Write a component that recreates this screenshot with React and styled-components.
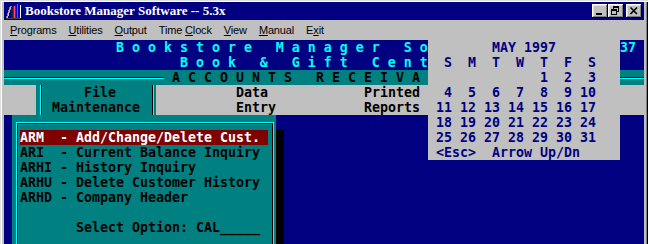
import React from "react";
import styled, { createGlobalStyle, css } from "styled-components";

const NAVY = "#000080";
const TEAL = "#008080";
const GRAY = "#c0c0c0";
const CYAN = "#00ffff";
const MAROON = "#800000";
const COL = 8;
const ROW = 15;

const Global = createGlobalStyle`
  html, body { margin: 0; padding: 0; background: ${GRAY}; }
  body { width: 648px; height: 244px; overflow: hidden; }
`;

const Window = styled.div`
  width: 648px;
  height: 244px;
  box-sizing: border-box;
  padding: 2px 4px 0 4px;
  background: ${GRAY};
  box-shadow: inset 1px 1px 0 #dfdfdf, inset 2px 2px 0 #fff, inset -1px 0 0 #000,
    inset -2px 0 0 #808080;
  display: flex;
  flex-direction: column;
  overflow: hidden;
`;

const TitleBar = styled.div`
  height: 18px;
  flex: none;
  background: ${NAVY};
  display: flex;
  align-items: center;
  padding: 0 2px;
`;

const TitleIcon = styled.svg`
  width: 16px;
  height: 16px;
  flex: none;
`;

const TitleText = styled.span`
  margin-left: 3px;
  flex: 1;
  color: #fff;
  font: bold 13px/18px "Liberation Serif", "Times New Roman", serif;
  white-space: nowrap;
`;

const Controls = styled.div`
  display: flex;
  align-items: center;
`;

const CtlBtn = styled.div`
  width: 16px;
  height: 14px;
  margin-left: ${(p) => p.$gap || 0}px;
  background: ${GRAY};
  box-shadow: inset -1px -1px 0 #000, inset 1px 1px 0 #fff, inset -2px -2px 0 #808080,
    inset 2px 2px 0 #dfdfdf;
  display: flex;
`;

const Glyph = styled.svg`
  width: 16px;
  height: 14px;
`;

const MenuBar = styled.div`
  height: 20px;
  flex: none;
  display: flex;
  font: 11px/20px "Liberation Sans", Arial, sans-serif;
  letter-spacing: -0.15px;
  color: #000;
`;

const MenuItem = styled.span`
  padding: 0 6px;
  white-space: nowrap;
`;

const Acc = styled.span`
  text-decoration: underline;
  text-underline-offset: 1px;
`;

const Console = styled.div`
  position: relative;
  width: 640px;
  flex: 1;
  background: ${NAVY};
  overflow: hidden;
  font: bold 13.29px/15px "DejaVu Sans Mono", monospace;
  white-space: pre;
`;

const Row = styled.div`
  display: flex;
  height: ${ROW}px;
  background: ${(p) => p.$bg || "transparent"};
  color: ${(p) => p.$fg || "inherit"};
`;

const Seg = styled.div`
  width: ${(p) => p.$cols * COL}px;
  flex: none;
  overflow: hidden;
`;

const Rule = styled.div`
  width: ${(p) => p.$cols * COL}px;
  flex: none;
  height: ${ROW}px;
  background: linear-gradient(#000, #000) 0 7px / 100% 1px no-repeat,
    linear-gradient(${CYAN}, ${CYAN}) 0 8px / 100% 1px no-repeat;
`;

const TabBand = styled.div`
  display: flex;
  height: ${ROW * 2}px;
  background: ${GRAY};
  color: #000;
`;

const Tab = styled.div`
  width: ${(p) => (p.$cols ? `${p.$cols * COL}px` : "auto")};
  flex: ${(p) => (p.$cols ? "none" : "1")};
  line-height: ${ROW}px;
  ${(p) =>
    p.$active &&
    css`
      background: linear-gradient(${CYAN}, ${CYAN}) 4px 0 / 1px 100% no-repeat,
        linear-gradient(#000, #000) 5px 0 / 1px 100% no-repeat,
        linear-gradient(#000, #000) ${p.$cols * COL - 4}px 0 / 1px 100% no-repeat,
        linear-gradient(${CYAN}, ${CYAN}) ${p.$cols * COL - 3}px 0 / 1px 100% no-repeat,
        ${TEAL};
    `}
`;

const TabLine = styled.div`
  height: ${ROW}px;
`;

const Body = styled.div`
  padding-left: ${COL}px;
`;

const MenuBox = styled.div`
  position: relative;
  width: ${33 * COL}px;
  height: ${11 * ROW}px;
  box-sizing: border-box;
  padding: ${ROW}px 0 0 ${COL}px;
  background: ${TEAL};
  color: #000;
  box-shadow: ${COL}px ${ROW}px 0 #000;
  &::before {
    content: "";
    position: absolute;
    left: 4px;
    top: 7px;
    right: 2px;
    bottom: 7px;
    border: 1px solid ${CYAN};
    box-shadow: inset 1px 1px 0 #000, inset -1px -1px 0 #000;
    pointer-events: none;
  }
`;

const MenuLine = styled.div`
  position: relative;
  width: ${31 * COL}px;
  height: ${ROW}px;
  background: ${(p) => (p.$hl ? MAROON : "transparent")};
  color: ${(p) => (p.$hl ? "#fff" : "#000")};
`;

const Calendar = styled.div`
  position: absolute;
  top: 0;
  left: ${53 * COL}px;
  width: ${24 * COL}px;
  height: ${8 * ROW}px;
  background: ${GRAY};
  color: ${NAVY};
`;

const CalLine = styled.div`
  height: ${ROW}px;
`;

// only the parts of the screen not hidden by the calendar pop-up (cols 53-76)
const titleLine = " ".repeat(14) + "B o o k s t o r e   M a n a g e r   S o";
const subLine = " ".repeat(22) + "B o o k   &   G i f t   C e n t";

const menuItems = [
  "ARM  - Add/Change/Delete Cust.",
  "ARI  - Current Balance Inquiry",
  "ARHI - History Inquiry",
  "ARHU - Delete Customer History",
  "ARHD - Company Header",
];

function calendarLines() {
  const lines = [" ".repeat(8) + "MAY 1997", "  S  M  T  W  T  F  S"];
  const first = 4; // Thursday
  let cells = [];
  for (let i = 0; i < first; i++) cells.push("   ");
  for (let d = 1; d <= 31; d++) {
    cells.push(" " + String(d).padStart(2, " "));
    if (cells.length === 7) {
      lines.push(cells.join(""));
      cells = [];
    }
  }
  if (cells.length) lines.push(cells.join(""));
  lines.push(" <Esc>  Arrow Up/Dn");
  return lines;
}

const menus = [
  ["", "P", "rograms"],
  ["", "U", "tilities"],
  ["", "O", "utput"],
  ["Time ", "C", "lock"],
  ["", "V", "iew"],
  ["", "M", "anual"],
  ["E", "x", "it"],
];

export default function App() {
  return (
    <>
      <Global />
      <Window>
        <TitleBar>
          <TitleIcon viewBox="0 0 16 16" shapeRendering="crispEdges">
            <polygon points="0,15 4,3 6,3 2,15" fill="#808080" />
            <polygon points="1,15 4,4 5,4 2,15" fill="#c0c0c0" />
            <rect x="5" y="4" width="2" height="11" fill="#202020" />
            <rect x="7" y="3" width="3" height="12" fill="#c00040" />
            <rect x="8" y="3" width="1" height="12" fill="#ff4080" />
            <rect x="10" y="1" width="4" height="14" fill="#0000c0" />
            <rect x="11" y="1" width="1" height="14" fill="#4060ff" />
            <rect x="14" y="2" width="1" height="13" fill="#ffffff" />
            <rect x="0" y="15" width="15" height="1" fill="#404040" />
          </TitleIcon>
          <TitleText>Bookstore Manager Software -- 5.3x</TitleText>
          <Controls>
            <CtlBtn>
              <Glyph viewBox="0 0 16 14" shapeRendering="crispEdges">
                <rect x="4" y="9" width="6" height="2" fill="#000" />
              </Glyph>
            </CtlBtn>
            <CtlBtn>
              <Glyph viewBox="0 0 16 14" shapeRendering="crispEdges">
                <rect x="5" y="2" width="6" height="2" fill="#000" />
                <rect x="10" y="4" width="1" height="4" fill="#000" />
                <rect x="9" y="7" width="1" height="1" fill="#000" />
                <rect x="5" y="4" width="1" height="1" fill="#000" />
                <rect x="3" y="5" width="6" height="2" fill="#000" />
                <rect x="3" y="7" width="1" height="4" fill="#000" />
                <rect x="8" y="7" width="1" height="4" fill="#000" />
                <rect x="3" y="10" width="6" height="1" fill="#000" />
              </Glyph>
            </CtlBtn>
            <CtlBtn $gap={2}>
              <Glyph viewBox="0 0 16 14">
                <path d="M4.5 3.5 L11 10 M11 3.5 L4.5 10" stroke="#000" strokeWidth="1.6" />
              </Glyph>
            </CtlBtn>
          </Controls>
        </TitleBar>

        <MenuBar>
          {menus.map(([a, b, c]) => (
            <MenuItem key={a + b + c}>
              {a}
              <Acc>{b}</Acc>
              {c}
            </MenuItem>
          ))}
        </MenuBar>

        <Console>
          <Row $fg={CYAN}>
            <Seg $cols={53}>{titleLine}</Seg>
            <Seg $cols={24} />
            <Seg $cols={3}>37</Seg>
          </Row>
          <Row $fg={CYAN}>
            <Seg $cols={53}>{subLine}</Seg>
          </Row>
          <Row $bg={TEAL} $fg="#000">
            <Rule $cols={20} />
            <Seg $cols={33}>{" A C C O U N T S   R E C E I V A"}</Seg>
            <Seg $cols={24} />
            <Rule $cols={3} />
          </Row>
          <TabBand>
            <Tab $cols={4} />
            <Tab $cols={15} $active>
              <TabLine>{"      File"}</TabLine>
              <TabLine>{"  Maintenance"}</TabLine>
            </Tab>
            <Tab $cols={16}>
              <TabLine>{"          Data"}</TabLine>
              <TabLine>{"          Entry"}</TabLine>
            </Tab>
            <Tab $cols={18}>
              <TabLine>{"          Printed"}</TabLine>
              <TabLine>{"          Reports"}</TabLine>
            </Tab>
            <Tab />
          </TabBand>
          <Body>
            <MenuBox>
              {menuItems.map((t, i) => (
                <MenuLine key={t} $hl={i === 0}>
                  {t}
                </MenuLine>
              ))}
              <MenuLine />
              <MenuLine>{"       Select Option: CAL_____"}</MenuLine>
            </MenuBox>
          </Body>
          <Calendar>
            {calendarLines().map((l, i) => (
              <CalLine key={i}>{l}</CalLine>
            ))}
          </Calendar>
        </Console>
      </Window>
    </>
  );
}
